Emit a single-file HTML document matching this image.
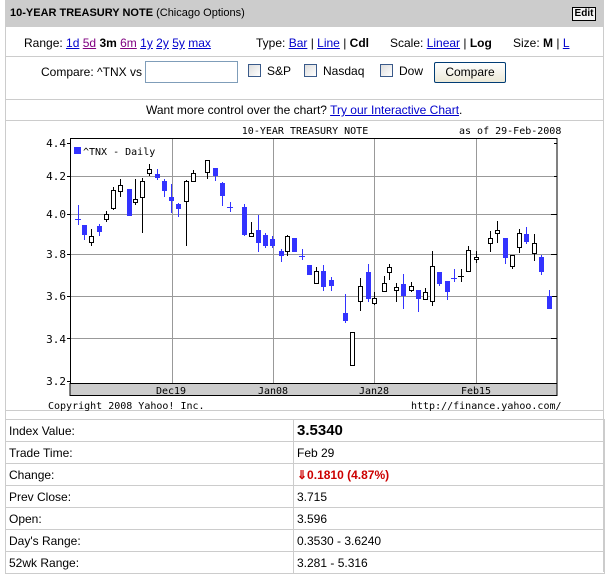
<!DOCTYPE html>
<html><head><style>
body{margin:0;width:606px;height:573px;background:#fff;font-family:"Liberation Sans",Arial,sans-serif;font-size:12px;color:#000;position:relative;overflow:hidden}
.a{position:absolute}
a{color:#00c;text-decoration:underline}
.v{color:#800080}
.cb{display:inline-block;width:11px;height:11px;border:1px solid #3a5a8a;background:linear-gradient(135deg,#ddd,#fff);vertical-align:-2px;margin-right:6px}
table{border-collapse:collapse}
td{border:1px solid #ccc;height:21px;padding:0 0 0 3px;font-size:12px}
</style></head><body>
<div class="a" style="left:5px;top:0;width:599px;height:27px;background:#ccc"></div>
<div class="a" style="left:10px;top:7px;font-size:11px;font-family:'Liberation Sans',sans-serif"><b>10-YEAR TREASURY NOTE</b> (Chicago Options)</div>
<div class="a" style="left:572px;top:7px;width:22px;height:12px;border:1px solid #000;background:#f4f4f4;font-size:10px;font-weight:bold;text-align:center;line-height:12px">Edit</div>
<div class="a" style="left:5px;top:27px;width:597px;height:545px;border-left:1px solid #ccc;border-right:1px solid #ccc"></div>
<div class="a" style="left:5px;top:56px;width:599px;height:1px;background:#ccc"></div>
<div class="a" style="left:5px;top:99px;width:599px;height:1px;background:#ccc"></div>
<div class="a" style="left:5px;top:120px;width:599px;height:1px;background:#ccc"></div>
<div class="a" style="left:5px;top:410px;width:599px;height:1px;background:#ccc"></div>
<div class="a" style="left:24px;top:36px">Range: <a>1d</a> <a class="v">5d</a> <b>3m</b> <a class="v">6m</a> <a>1y</a> <a>2y</a> <a>5y</a> <a>max</a></div>
<div class="a" style="left:256px;top:36px">Type: <a>Bar</a> | <a>Line</a> | <b>Cdl</b></div>
<div class="a" style="left:390px;top:36px">Scale: <a>Linear</a> | <b>Log</b></div>
<div class="a" style="left:513px;top:36px">Size: <b>M</b> | <a>L</a></div>
<div class="a" style="left:41px;top:65px">Compare: ^TNX vs</div>
<div class="a" style="left:145px;top:61px;width:91px;height:20px;border:1px solid #7f9db9"></div>
<div class="a" style="left:248px;top:64px"><span class="cb"></span>S&amp;P</div>
<div class="a" style="left:304px;top:64px"><span class="cb"></span>Nasdaq</div>
<div class="a" style="left:380px;top:64px"><span class="cb"></span>Dow</div>
<div class="a" style="left:434px;top:62px;width:70px;height:19px;border:1px solid #003c74;border-radius:2px;background:linear-gradient(#fff,#ece9d8);text-align:center;line-height:19px">Compare</div>
<div class="a" style="left:146px;top:103px">Want more control over the chart? <a>Try our Interactive Chart</a>.</div>
<svg class="a" style="left:0;top:0" width="606" height="573">
<g font-family="DejaVu Sans Mono,Liberation Mono,monospace" font-size="10">
<text x="305" y="134" text-anchor="middle">10-YEAR TREASURY NOTE</text>
<text x="459" y="134">as of 29-Feb-2008</text>
<text x="48" y="409">Copyright 2008 Yahoo! Inc.</text>
<text x="411" y="409">http://finance.yahoo.com/</text>
<g text-anchor="end" font-size="11"><text x="66" y="147">4.4</text><text x="66" y="180">4.2</text><text x="66" y="218">4.0</text><text x="66" y="258">3.8</text><text x="66" y="300">3.6</text><text x="66" y="343">3.4</text><text x="66" y="385">3.2</text></g>
</g>
<rect x="70" y="383.5" width="487" height="12" fill="#ccc" stroke="#000"/>
<g text-anchor="middle" font-family="DejaVu Sans Mono,Liberation Mono,monospace" font-size="10"><text x="171" y="394">Dec19</text><text x="273" y="394">Jan08</text><text x="374" y="394">Jan28</text><text x="476" y="394">Feb15</text></g>
<path d="M70 176.5H557M70 214.5H557M70 254.5H557M70 296.5H557M70 338.5H557M172.5 138V383M273.5 138V383M374.5 138V383M476.5 138V383" stroke="#999" stroke-width="1"/>
<rect x="70.5" y="138.5" width="486.5" height="245" fill="none" stroke="#000"/>
<path d="M67 143.5H70M67 176.5H70M67 214.5H70M67 254.5H70M67 296.5H70M67 338.5H70M67 381.5H70M557 143.5H554M557 176.5H554M557 214.5H551M557 254.5H551M557 296.5H551M557 338.5H551" stroke="#000"/>
<rect x="74" y="147" width="7" height="7" fill="#33f"/>
<text x="83" y="155" font-family="DejaVu Sans Mono,Liberation Mono,monospace" font-size="10">^TNX - Daily</text>
<path fill="none" stroke="#33f" d="M78.5 205V225M75 219.5H81 M84.5 225V240 M99.5 224V236 M129.5 189V216 M157.5 169V180 M164.5 179V197 M171.5 184V213 M178.5 203V217 M215.5 168V181 M222.5 182V206 M230.5 202V212M227 207.5H233 M244.5 204V236 M258.5 215V252 M265.5 233V248 M272.5 236V248 M281.5 249V262 M294.5 238V252 M302.5 249V260M299 256.5H305 M309.5 265V275 M323.5 265V291 M331.5 277V291 M345.5 294V323 M368.5 264V302 M403.5 274V309 M418.5 290V312 M439.5 272V286 M447.5 281V300 M454.5 269V282M451 278.5H457 M505.5 238V264 M526.5 227V244 M541.5 255V275 M549.5 290V309"/>
<g fill="#33f">
<rect x="82" y="225" width="5" height="10"/><rect x="97" y="226" width="5" height="6"/><rect x="127" y="189" width="5" height="27"/><rect x="155" y="174" width="5" height="4"/><rect x="162" y="181" width="5" height="10"/><rect x="169" y="197" width="5" height="4"/><rect x="176" y="204" width="5" height="5"/><rect x="213" y="168" width="5" height="8"/><rect x="220" y="183" width="5" height="13"/><rect x="242" y="207" width="5" height="28"/><rect x="256" y="230" width="5" height="13"/><rect x="263" y="235" width="5" height="11"/><rect x="270" y="239" width="5" height="7"/><rect x="279" y="251" width="5" height="5"/><rect x="292" y="238" width="5" height="14"/><rect x="307" y="265" width="5" height="10"/><rect x="321" y="271" width="5" height="16"/><rect x="329" y="280" width="5" height="6"/><rect x="343" y="313" width="5" height="8"/><rect x="366" y="272" width="5" height="27"/><rect x="401" y="284" width="5" height="12"/><rect x="416" y="290" width="5" height="9"/><rect x="437" y="272" width="5" height="12"/><rect x="445" y="281" width="5" height="11"/><rect x="503" y="238" width="5" height="20"/><rect x="524" y="234" width="5" height="8"/><rect x="539" y="257" width="5" height="15"/><rect x="547" y="296" width="5" height="13"/>
</g>
<path fill="none" stroke="#000" d="M91.5 229V246 M106.5 211V222 M113.5 187V210 M120.5 179V197 M135.5 179V205 M142.5 178V233 M149.5 164V176 M186.5 180V246 M193.5 170V182 M207.5 160V179 M251.5 222V236 M287.5 235V256 M316.5 267V284 M352.5 332V365 M360.5 278V311 M374.5 292V305 M384.5 276V292 M389.5 264V280 M396.5 283V302 M411.5 282V292 M425.5 288V299 M432.5 251V306 M461.5 269V282M458 276.5H464 M468.5 246V271 M476.5 251V263 M490.5 231V252 M497.5 221V243 M512.5 255V269 M519.5 229V253 M534.5 234V261"/>
<g fill="#fff" stroke="#000">
<rect x="89.5" y="236.5" width="4" height="6"/><rect x="104.5" y="214.5" width="4" height="5"/><rect x="111.5" y="190.5" width="4" height="18"/><rect x="118.5" y="185.5" width="4" height="6"/><rect x="133.5" y="199.5" width="4" height="3"/><rect x="140.5" y="181.5" width="4" height="16"/><rect x="147.5" y="169.5" width="4" height="4"/><rect x="184.5" y="181.5" width="4" height="20"/><rect x="191.5" y="173.5" width="4" height="8"/><rect x="205.5" y="160.5" width="4" height="12"/><rect x="249.5" y="233.5" width="4" height="3"/><rect x="285.5" y="236.5" width="4" height="15"/><rect x="314.5" y="271.5" width="4" height="12"/><rect x="350.5" y="332.5" width="4" height="33"/><rect x="358.5" y="286.5" width="4" height="15"/><rect x="372.5" y="298.5" width="4" height="5"/><rect x="382.5" y="283.5" width="4" height="8"/><rect x="387.5" y="267.5" width="4" height="5"/><rect x="394.5" y="287.5" width="4" height="3"/><rect x="409.5" y="286.5" width="4" height="4"/><rect x="423.5" y="292.5" width="4" height="7"/><rect x="430.5" y="266.5" width="4" height="35"/><rect x="466.5" y="250.5" width="4" height="21"/><rect x="474.5" y="257.5" width="4" height="2"/><rect x="488.5" y="238.5" width="4" height="5"/><rect x="495.5" y="230.5" width="4" height="3"/><rect x="510.5" y="255.5" width="4" height="11"/><rect x="517.5" y="233.5" width="4" height="14"/><rect x="532.5" y="243.5" width="4" height="10"/>
</g>
</svg>
<table class="a" style="left:5px;top:419px;width:600px">
<tr><td style="width:284px">Index Value:</td><td style="font-size:15px;font-weight:bold">3.5340</td></tr>
<tr><td>Trade Time:</td><td>Feb 29</td></tr>
<tr><td>Change:</td><td style="color:#c00;font-weight:bold">&#8659;0.1810 (4.87%)</td></tr>
<tr><td>Prev Close:</td><td>3.715</td></tr>
<tr><td>Open:</td><td>3.596</td></tr>
<tr><td>Day's Range:</td><td>0.3530 - 3.6240</td></tr>
<tr><td>52wk Range:</td><td>3.281 - 5.316</td></tr>
</table>
</body></html>
